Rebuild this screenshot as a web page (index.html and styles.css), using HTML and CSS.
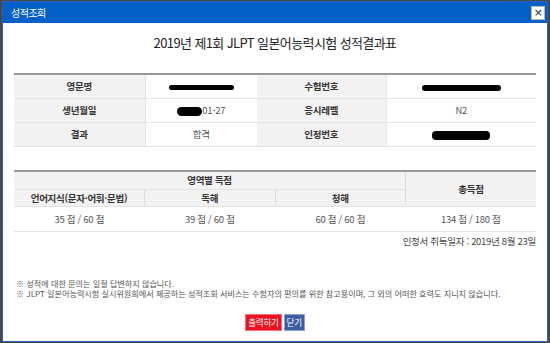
FILE: index.html
```html
<!DOCTYPE html>
<html lang="ko">
<head>
    <meta charset="UTF-8">
    <title>성적조회</title>
    <link rel="stylesheet" href="styles.css">
</head>
<body>
    <div class="dialog">
        <div class="titlebar">
            <span>성적조회</span>
            <span class="close">×</span>
        </div>
        <div class="content">
            <h1>2019년 제1회 JLPT 일본어능력시험 성적결과표</h1>

            <table class="info">
                <colgroup>
                    <col style="width:131px"><col style="width:112px"><col style="width:129px"><col>
                </colgroup>
                <tr>
                    <th>영문명</th>
                    <td><span class="mask m1"></span></td>
                    <th>수험번호</th>
                    <td><span class="mask m2"></span></td>
                </tr>
                <tr>
                    <th>생년월일</th>
                    <td><span class="mask m3"></span>01-27</td>
                    <th>응시레벨</th>
                    <td>N2</td>
                </tr>
                <tr>
                    <th>결과</th>
                    <td>합격</td>
                    <th>인정번호</th>
                    <td><span class="mask m4"></span></td>
                </tr>
            </table>

            <table class="score">
                <tr class="r1">
                    <th colspan="3">영역별 득점</th>
                    <th rowspan="2" class="total">총득점</th>
                </tr>
                <tr class="r2">
                    <th>언어지식(문자·어휘·문법)</th>
                    <th>독해</th>
                    <th>청해</th>
                </tr>
                <tr class="r3">
                    <td>35 점 / 60 점</td>
                    <td>39 점 / 60 점</td>
                    <td>60 점 / 60 점</td>
                    <td>134 점 / 180 점</td>
                </tr>
            </table>

            <p class="date">인정서 취득일자 : 2019년 8월 23일</p>

            <ul class="notes">
                <li>※ 성적에 대한 문의는 일절 답변하지 않습니다.</li>
                <li>※ JLPT 일본어능력시험 실시위원회에서 제공하는 성적조회 서비스는 수험자의 편의를 위한 참고용이며, 그 외의 어떠한 효력도 지니지 않습니다.</li>
            </ul>

            <div class="buttons">
                <button class="btn red">출력하기</button>
                <button class="btn blue">닫기</button>
            </div>
        </div>
    </div>
</body>
</html>
```

FILE: styles.css
```css
body { margin: 0; background: #474747; font-family: "Noto Sans CJK KR", "Noto Sans", sans-serif; }
.dialog { margin: 1px 2px; height: 341px; box-sizing: border-box; border: 1px solid #2a62c0; background: #fff; display: flex; flex-direction: column; }
.titlebar { height: 21px; background: #0360c9; color: #fff; font-size: 10px; display: flex; align-items: center; justify-content: space-between; padding: 0 2px 0 8px; letter-spacing: -0.5px; }
.close { width: 12px; height: 12px; background: #fff; border: 1px solid #bbb; color: #555; font-size: 11px; line-height: 11px; text-align: center; font-weight: bold; font-family: "DejaVu Sans", sans-serif; }
.content { padding: 0 11px; }

h1 { margin: 10px 0 20px; font-size: 13px; line-height: 20px; font-weight: normal; text-align: center; color: #222; letter-spacing: -0.6px; }

table { width: 100%; border-collapse: collapse; table-layout: fixed; font-size: 9.5px; letter-spacing: -0.3px; }
th { background: #f2f2f2; color: #333; font-weight: bold; }
td { background: #fff; color: #555; }
th, td { text-align: center; border-bottom: 1px solid #e2e2e2; padding: 0; }

.info { border-top: 2px solid #9a9a9a; }
.info tr { height: 24px; }
.info td { border-left: 1px solid #e6e6e6; }

.mask { display: inline-block; background: #000; border-radius: 4px; vertical-align: middle; }
.m1 { width: 65px; height: 5px; }
.m2 { width: 79px; height: 6px; }
.m3 { width: 25px; height: 9px; border-radius: 5px; }
.m4 { width: 58px; height: 9px; }

.score { margin-top: 23px; border-top: 2px solid #9a9a9a; }
.score .r1 { height: 19px; }
.score .r2 { height: 17px; }
.score .r3 { height: 25px; }
.score .total { border-left: 1px solid #dcdcdc; }
.score .r2 th + th { border-left: 1px solid #dcdcdc; }

.date { margin: 2px 0 0; text-align: right; font-size: 9.5px; line-height: 14px; color: #444; letter-spacing: -0.3px; }

.notes { list-style: none; margin: 31px 0 0; padding: 0 0 0 2px; font-size: 8.1px; line-height: 10px; color: #555; }

.buttons { margin-top: 15px; display: flex; justify-content: center; gap: 2px; }
.btn { height: 17px; padding: 0 2px; border: 1px solid #c9c9c9; color: #fff; font-family: inherit; font-size: 8.6px; line-height: 15px; letter-spacing: -0.3px; }
.red { background: #ee1122; border-color: #f07080; }
.blue { background: #3d5ca4; border-color: #8ea0c8; }
```
